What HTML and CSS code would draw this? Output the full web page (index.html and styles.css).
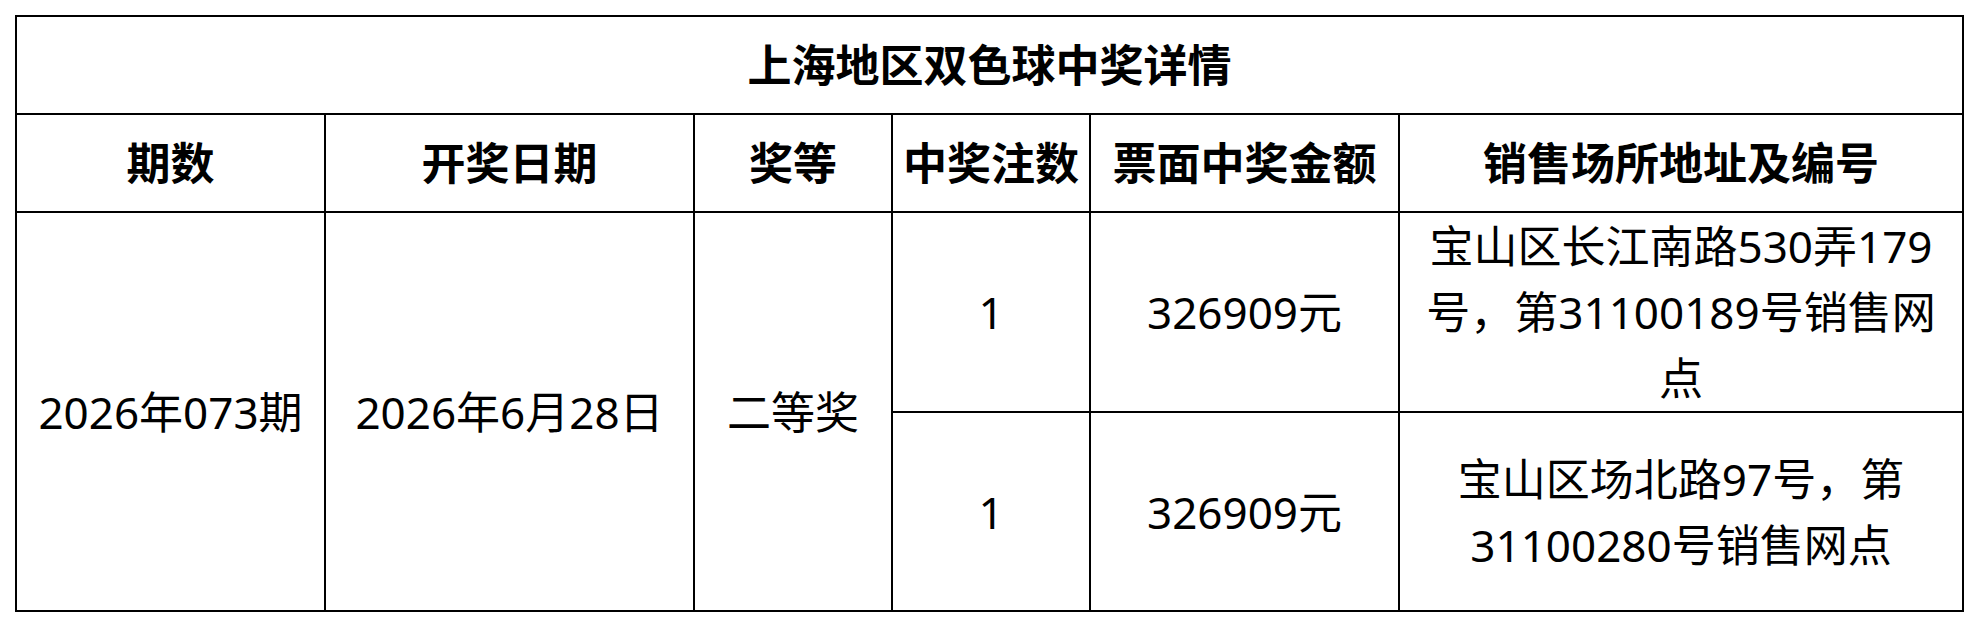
FILE: index.html
```html
<!DOCTYPE html>
<html lang="zh-CN">
<head>
<meta charset="utf-8">
<title>上海地区双色球中奖详情</title>
<link rel="stylesheet" href="styles.css">
</head>
<body>
<div class="page">
  <div class="prize-table">
    <div class="cell title">上海地区双色球中奖详情</div>
    <div class="cell head">期数</div>
    <div class="cell head">开奖日期</div>
    <div class="cell head">奖等</div>
    <div class="cell head">中奖注数</div>
    <div class="cell head">票面中奖金额</div>
    <div class="cell head">销售场所地址及编号</div>
    <div class="cell span2">2026年073期</div>
    <div class="cell span2">2026年6月28日</div>
    <div class="cell span2">二等奖</div>
    <div class="cell">1</div>
    <div class="cell">326909元</div>
    <div class="cell addr">宝山区长江南路530弄179号，第31100189号销售网点</div>
    <div class="cell">1</div>
    <div class="cell">326909元</div>
    <div class="cell addr">宝山区场北路97号，第31100280号销售网点</div>
  </div>
</div>
</body>
</html>
```
FILE: styles.css
```css
html, body {
  margin: 0;
  padding: 0;
  background: #ffffff;
}

body {
  font-family: "Noto Sans", "Noto Sans CJK SC", sans-serif;
  color: #000000;
}

.page {
  padding: 15px 0 0 15px;
}

.prize-table {
  display: inline-grid;
  grid-template-columns: 309px 369px 198px 198px 309px 564px;
  grid-template-rows: 98px 98px 200px 199px;
  border-top: 2px solid #000;
  border-left: 2px solid #000;
}

.cell {
  box-sizing: border-box;
  border-right: 2px solid #000;
  border-bottom: 2px solid #000;
  display: flex;
  align-items: center;
  justify-content: center;
  text-align: center;
  font-size: 44px;
  line-height: 66px;
  padding: 0 8px;
}

.title {
  grid-column: 1 / -1;
  font-weight: 700;
}

.head {
  font-weight: 700;
}

.span2 {
  grid-row: span 2;
}

.addr {
  padding: 0 15px;
}
```
